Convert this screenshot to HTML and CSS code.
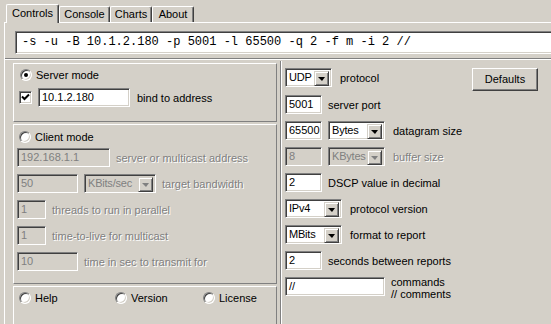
FILE: index.html
```html
<!DOCTYPE html>
<html lang="en">
<head>
    <meta charset="UTF-8">
    <title>Iperf</title>
    <link rel="stylesheet" href="styles.css">
</head>
<body>
    <!-- Tab strip -->
    <div class="tabs">
        <div class="tab tab-controls active">Controls</div>
        <div class="tab tab-console">Console</div>
        <div class="tab tab-charts">Charts</div>
        <div class="tab tab-about">About</div>
    </div>

    <div class="page">
        <div class="cmd">-s -u -B 10.1.2.180 -p 5001 -l 65500 -q 2 -f m -i 2 //</div>

        <div class="panels">
            <!-- Left side - mode settings -->
            <div class="left">
                <div class="group server">
                    <div class="radio-row">
                        <span class="radio checked"></span>
                        <span>Server mode</span>
                    </div>
                    <div class="row bind-row">
                        <span class="check">
                            <svg width="9" height="9" viewBox="0 0 9 9"><path d="M1 3.5 L3.5 6 L8 1.5" fill="none" stroke="#000" stroke-width="2"/></svg>
                        </span>
                        <span class="field w92">10.1.2.180</span>
                        <span class="label">bind to address</span>
                    </div>
                </div>

                <div class="group client">
                    <div class="radio-row">
                        <span class="radio"></span>
                        <span>Client mode</span>
                    </div>
                    <div class="rows">
                        <div class="row">
                            <span class="field w93 off">192.168.1.1</span>
                            <span class="label off">server or multicast address</span>
                        </div>
                        <div class="row">
                            <span class="field w61 off">50</span>
                            <span class="select w72 off">KBits/sec<span class="drop"></span></span>
                            <span class="label off">target bandwidth</span>
                        </div>
                        <div class="row">
                            <span class="field w29 off">1</span>
                            <span class="label off">threads to run in parallel</span>
                        </div>
                        <div class="row">
                            <span class="field w29 off">1</span>
                            <span class="label off">time-to-live for multicast</span>
                        </div>
                        <div class="row">
                            <span class="field w61 off">10</span>
                            <span class="label off">time in sec to transmit for</span>
                        </div>
                    </div>
                </div>

                <div class="group info">
                    <div class="radio-row help"><span class="radio"></span><span>Help</span></div>
                    <div class="radio-row version"><span class="radio"></span><span>Version</span></div>
                    <div class="radio-row"><span class="radio"></span><span>License</span></div>
                </div>
            </div>

            <!-- Right side - common settings -->
            <div class="right">
                <div class="row">
                    <span class="select w47">UDP<span class="drop"></span></span>
                    <span class="label">protocol</span>
                    <span class="button">Defaults</span>
                </div>
                <div class="row">
                    <span class="field w37">5001</span>
                    <span class="label">server port</span>
                </div>
                <div class="row">
                    <span class="field w37">65500</span>
                    <span class="select w57">Bytes<span class="drop"></span></span>
                    <span class="label">datagram size</span>
                </div>
                <div class="row">
                    <span class="field w37 off">8</span>
                    <span class="select w57 off">KBytes<span class="drop"></span></span>
                    <span class="label off">buffer size</span>
                </div>
                <div class="row">
                    <span class="field w37">2</span>
                    <span class="label">DSCP value in decimal</span>
                </div>
                <div class="row">
                    <span class="select w57">IPv4<span class="drop"></span></span>
                    <span class="label">protocol version</span>
                </div>
                <div class="row">
                    <span class="select w57">MBits<span class="drop"></span></span>
                    <span class="label">format to report</span>
                </div>
                <div class="row">
                    <span class="field w37">2</span>
                    <span class="label">seconds between reports</span>
                </div>
                <div class="row">
                    <span class="field w100">//</span>
                    <span class="label two-line">commands<br>// comments</span>
                </div>
            </div>
        </div>
    </div>
</body>
</html>
```

FILE: styles.css
```css
* {
    margin: 0;
    padding: 0;
    box-sizing: border-box;
}

body {
    width: 551px;
    height: 324px;
    overflow: hidden;
    background-color: #d4d0c8;
    color: #000;
    font-family: "Liberation Sans", Arial, sans-serif;
    font-size: 11px;
}

/* Tabs */
.tabs {
    display: flex;
    align-items: flex-end;
    height: 22px;
    padding-left: 6px;
}

.tab {
    height: 16px;
    line-height: 14px;
    text-align: center;
    border-top: 1px solid #fff;
    border-left: 1px solid #fff;
    border-right: 1px solid #404040;
    box-shadow: inset -1px 0 #808080;
    border-radius: 2px 2px 0 0;
}

.tab-controls { width: 53px; }
.tab-console { width: 51px; }
.tab-charts { width: 42px; }
.tab-about { width: 42px; }

.tab.active {
    position: relative;
    height: 19px;
    line-height: 17px;
    margin-bottom: -1px;
    background-color: #d4d0c8;
    z-index: 1;
}

.page {
    height: 302px;
    margin-left: 4px;
    border-top: 1px solid #fff;
    border-left: 1px solid #fff;
}

/* Command line */
.cmd {
    height: 23px;
    margin: 8px 0 0 10px;
    width: 560px;
    background-color: #fff;
    border: 1px solid;
    border-color: #808080 #fff #fff #808080;
    box-shadow: inset 1px 1px #404040, inset -1px -1px #d4d0c8;
    padding-left: 6px;
    line-height: 21px;
    font-family: "Liberation Mono", "Courier New", monospace;
    font-size: 12px;
    white-space: pre;
}

.panels {
    display: flex;
    margin-top: 4px;
    height: 270px;
    border-top: 1px solid #808080;
    box-shadow: inset 0 1px #fff;
}

/* Left panel */
.left {
    width: 264px;
    margin-left: 8px;
    padding-top: 4px;
    display: flex;
    flex-direction: column;
    gap: 2px;
}

.group {
    border: 1px solid;
    border-color: #fff #808080 #808080 #fff;
}

.group.server {
    height: 59px;
    padding: 5px 0 0 6px;
}

.group.client {
    height: 160px;
    padding: 6px 0 0 3px;
}

.group.info {
    flex: 1;
    display: flex;
    padding: 5px 0 0 5px;
}

.radio-row {
    display: flex;
    align-items: center;
    gap: 4px;
    height: 12px;
}

.group.client .radio-row {
    margin-left: 2px;
}

.radio-row.help {
    width: 96px;
}

.radio-row.version {
    width: 88px;
}

.radio {
    position: relative;
    width: 12px;
    height: 12px;
    border-radius: 50%;
    background-color: #fff;
    border: 1px solid;
    border-color: #808080 #fff #fff #808080;
    box-shadow: inset 1px 1px #404040, inset -1px -1px #d4d0c8;
}

.radio.checked:after {
    content: '';
    position: absolute;
    left: 3px;
    top: 3px;
    width: 4px;
    height: 4px;
    border-radius: 50%;
    background-color: #000;
}

.check {
    width: 13px;
    height: 13px;
    background-color: #fff;
    border: 1px solid;
    border-color: #808080 #fff #fff #808080;
    box-shadow: inset 1px 1px #404040, inset -1px -1px #d4d0c8;
    display: flex;
    align-items: center;
    justify-content: center;
}

.bind-row {
    margin-top: 7px;
    gap: 5px;
}

.bind-row .check {
    margin-left: -1px;
}

.bind-row .label {
    margin-left: 1px;
}

.rows {
    display: flex;
    flex-direction: column;
    gap: 7px;
    margin-top: 5px;
}

/* Shared controls */
.row {
    display: flex;
    align-items: center;
    gap: 6px;
    height: 19px;
}

.field, .select {
    height: 19px;
    background-color: #fff;
    border: 1px solid;
    border-color: #808080 #fff #fff #808080;
    box-shadow: inset 1px 1px #404040, inset -1px -1px #d4d0c8;
    padding-left: 3px;
    line-height: 17px;
    white-space: nowrap;
}

.select {
    position: relative;
    letter-spacing: -0.2px;
}

.drop {
    position: absolute;
    top: 2px;
    right: 2px;
    width: 15px;
    height: 15px;
    background-color: #d4d0c8;
    border: 1px solid;
    border-color: #d4d0c8 #404040 #404040 #d4d0c8;
    box-shadow: inset 1px 1px #fff, inset -1px -1px #808080;
}

.drop:after {
    content: '';
    position: absolute;
    left: 3px;
    top: 5px;
    border-left: 4px solid transparent;
    border-right: 3px solid transparent;
    border-top: 4px solid #000;
}

.field.off, .select.off {
    background-color: #d4d0c8;
    color: #808080;
}

.select.off .drop:after {
    border-top-color: #808080;
}

.label.off {
    color: #808080;
    text-shadow: 1px 1px 0 #fff;
}

.w29 { width: 29px; }
.w37 { width: 37px; }
.w47 { width: 47px; }
.w57 { width: 57px; }
.w61 { width: 61px; }
.w72 { width: 72px; }
.w92 { width: 92px; }
.w93 { width: 93px; }
.w100 { width: 100px; }

.select.w57 + .label,
.select.w47 + .label {
    margin-left: 2px;
}

/* Right panel */
.right {
    flex: 1;
    margin-left: 3px;
    margin-top: 2px;
    border-left: 1px solid #808080;
    box-shadow: inset 1px 0 #fff;
    padding: 7px 0 0 4px;
    display: flex;
    flex-direction: column;
    gap: 7px;
}

.right .row:first-child {
    margin-bottom: 1px;
}

.button {
    margin-left: auto;
    margin-right: 13px;
    width: 66px;
    height: 23px;
    align-self: flex-start;
    text-align: center;
    line-height: 21px;
    border: 1px solid;
    border-color: #fff #404040 #404040 #fff;
    box-shadow: inset -1px -1px #808080;
}

.two-line {
    align-self: flex-start;
    line-height: 12px;
    margin-top: -1px;
}
```
